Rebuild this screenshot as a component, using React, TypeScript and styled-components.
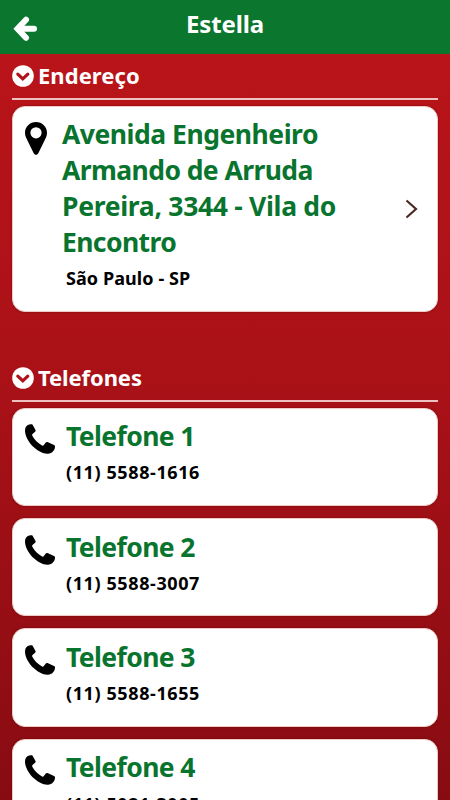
import React from 'react';
import styled, { createGlobalStyle } from 'styled-components';

const GlobalStyle = createGlobalStyle`
  *, *::before, *::after { box-sizing: border-box; }
  html, body { margin: 0; padding: 0; }
  body { overflow: hidden; }
`;

const Screen = styled.div`
  width: 100%;
  height: 800px;
  overflow: hidden;
  display: flex;
  flex-direction: column;
  font-family: 'Noto Sans', 'Open Sans', sans-serif;
  font-weight: 700;
  background: linear-gradient(#b91419 54px, #a81117 400px, #870c12 800px);
`;

const Header = styled.header`
  flex: none;
  height: 54px;
  display: grid;
  grid-template-columns: 50px 1fr 50px;
  color: #fff;
  background: #0a762e;
`;

const BackButton = styled.button`
  border: 0;
  padding: 16px 0 0 13px;
  display: flex;
  align-items: flex-start;
  color: inherit;
  background: none;
`;

const Title = styled.h1<{ $spacing: number }>`
  margin: 0;
  padding-top: 8px;
  text-align: center;
  font-size: 24px;
  line-height: 32px;
  letter-spacing: ${(p) => p.$spacing}px;
`;

const Content = styled.main`
  flex: none;
  padding: 0 12px;
`;

const Section = styled.section`
  margin-bottom: 44.5px;
`;

const SectionHeader = styled.div`
  height: 46px;
  padding-top: 6px;
  display: flex;
  align-items: flex-start;
  gap: 4px;
  color: #fff;
  border-bottom: 2px solid #efc0c0;
`;

const SectionIcon = styled.svg`
  flex: none;
  margin-top: 5px;
`;

const SectionTitle = styled.h2<{ $spacing: number }>`
  margin: 0;
  font-size: 22px;
  line-height: 30px;
  letter-spacing: ${(p) => p.$spacing}px;
`;

const CardList = styled.div`
  margin-top: 5.6px;
  display: flex;
  flex-direction: column;
  gap: 12px;
`;

const Card = styled.article<{ $height: number }>`
  height: ${(p) => p.$height}px;
  padding: 9.5px 19px 0 12px;
  display: grid;
  grid-template-columns: 37px 1fr auto;
  border: 1px solid #f0c9c6;
  border-radius: 13px;
  background: #fff;
  box-shadow: 0 0 2px rgba(80, 0, 0, 0.6);
`;

const IconSlot = styled.div<{ $top: number }>`
  padding-top: ${(p) => p.$top}px;
  line-height: 0;
`;

const Details = styled.div<{ $indent?: number }>`
  padding-left: ${(p) => p.$indent ?? 0}px;
  white-space: nowrap;
`;

const Heading = styled.div<{ $spacing: number }>`
  font-size: 26.5px;
  line-height: 36px;
  letter-spacing: ${(p) => p.$spacing}px;
  color: #08742d;
`;

const Note = styled.div<{ $spacing: number; $indent?: number }>`
  margin-top: 5.3px;
  padding-left: ${(p) => p.$indent ?? 0}px;
  font-size: 18px;
  line-height: 26px;
  letter-spacing: ${(p) => p.$spacing}px;
  color: #000;
`;

const Chevron = styled.svg`
  margin-top: 83px;
`;

const addressLines = [
  { text: 'Avenida Engenheiro', spacing: -0.48 },
  { text: 'Armando de Arruda', spacing: -0.58 },
  { text: 'Pereira, 3344 - Vila do', spacing: -0.3 },
  { text: 'Encontro', spacing: -0.6 },
];

const phones = [
  { label: 'Telefone 1', number: '(11) 5588-1616' },
  { label: 'Telefone 2', number: '(11) 5588-3007' },
  { label: 'Telefone 3', number: '(11) 5588-1655' },
  { label: 'Telefone 4', number: '(11) 5021-3005' },
];

function BackIcon() {
  return (
    <svg width="25" height="26" viewBox="0 0 25 26" fill="none" stroke="#fff" strokeLinecap="round">
      <path d="M13 3.8 4.5 12.8 13 21.8" strokeWidth="6" strokeLinejoin="miter" />
      <path d="M6 12.8H21" strokeWidth="6" />
    </svg>
  );
}

function CollapseIcon() {
  return (
    <SectionIcon width="22" height="22" viewBox="0 0 22 22">
      <circle cx="11" cy="11" r="10.8" fill="#fff" />
      <path d="M5.8 9.1 10.8 13.9 15.8 9.1" fill="none" stroke="#b01218" strokeWidth="3.2" strokeLinecap="round" />
    </SectionIcon>
  );
}

function PinIcon() {
  return (
    <svg width="22" height="33" viewBox="0 0 22 33">
      <path
        fillRule="evenodd"
        d="M11 0C4.9 0 0 4.8 0 10.8c0 1.7.3 3.1 1 4.6l7.7 15.8c.4.9 1.3 1.5 2.3 1.5s1.9-.6 2.3-1.5L21 15.4c.7-1.5 1-2.9 1-4.6C22 4.8 17.1 0 11 0Zm0 5.2a5.6 5.6 0 1 1 0 11.2 5.6 5.6 0 0 1 0-11.2Z"
      />
    </svg>
  );
}

function PhoneIcon() {
  return (
    <svg width="30" height="30" viewBox="0 0 30 30">
      <path d="M2.4 1.3C4 .2 5.8-.1 7 .3c.5.2.8.7 1 1.2l2.5 4.6c.3.7.1 1.200-.4 1.700L7.500 10.100c-.4.500-.500 1-.2 1.600 1.900 3.700 5.700 7.500 9.800 9.700.7.400 1.200.3 1.700-.3l2-2.500c.4-.6 1-.8 1.700-.5l6.500 3c.8.400 1.100.9 1 1.800-.3 3.300-2.900 6.500-7 6.800-4.700.3-10.800-3-15.600-7.700C3 17.200.1 11.500 0 6.700c0-2.300.8-4.300 2.400-5.400Z" />
    </svg>
  );
}

export default function App() {
  return (
    <Screen>
      <GlobalStyle />
      <Header>
        <BackButton aria-label="Voltar">
          <BackIcon />
        </BackButton>
        <Title $spacing={-0.1}>Estella</Title>
      </Header>
      <Content>
        <Section>
          <SectionHeader>
            <CollapseIcon />
            <SectionTitle $spacing={0.05}>Endereço</SectionTitle>
          </SectionHeader>
          <CardList>
            <Card $height={206}>
              <IconSlot $top={6}>
                <PinIcon />
              </IconSlot>
              <Details>
                {addressLines.map((line) => (
                  <Heading key={line.text} $spacing={line.spacing}>
                    {line.text}
                  </Heading>
                ))}
                <Note $spacing={0.08} $indent={4}>São Paulo - SP</Note>
              </Details>
              <Chevron width="13" height="20" viewBox="0 0 13 20" fill="none" stroke="#4a2a20" strokeWidth="2.2">
                <path d="M1.5 1.5 11 10 1.5 18.5" />
              </Chevron>
            </Card>
          </CardList>
        </Section>
        <Section>
          <SectionHeader>
            <CollapseIcon />
            <SectionTitle $spacing={-0.1}>Telefones</SectionTitle>
          </SectionHeader>
          <CardList>
            {phones.map((phone) => (
              <Card key={phone.label} $height={98.4}>
                <IconSlot $top={6}>
                  <PhoneIcon />
                </IconSlot>
                <Details $indent={4}>
                  <Heading $spacing={-0.6}>{phone.label}</Heading>
                  <Note $spacing={0.6}>{phone.number}</Note>
                </Details>
              </Card>
            ))}
          </CardList>
        </Section>
      </Content>
    </Screen>
  );
}
